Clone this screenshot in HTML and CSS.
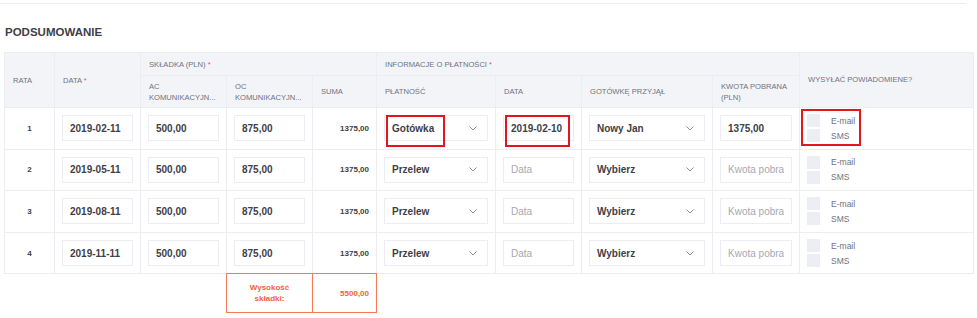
FILE: index.html
```html
<!DOCTYPE html>
<html lang="pl">
<head>
    <meta charset="UTF-8">
    <title>Podsumowanie</title>
    <link rel="stylesheet" href="styles.css">
</head>
<body>

<div class="rule"></div>
<h3 class="section-title">PODSUMOWANIE</h3>

<table class="rates">
    <colgroup>
        <col style="width: 50px">
        <col style="width: 86px">
        <col style="width: 86px">
        <col style="width: 86px">
        <col style="width: 64px">
        <col style="width: 119px">
        <col style="width: 86px">
        <col style="width: 131px">
        <col style="width: 87px">
        <col style="width: 174px">
    </colgroup>
    <thead>
        <tr class="head-top">
            <th rowspan="2">RATA</th>
            <th rowspan="2">DATA <span class="req">*</span></th>
            <th colspan="3">SKŁADKA (PLN) <span class="req">*</span></th>
            <th colspan="4">INFORMACJE O PŁATNOŚCI <span class="req">*</span></th>
            <th rowspan="2" class="notify-head">WYSYŁAĆ POWIADOMIENE?</th>
        </tr>
        <tr class="head-sub">
            <th>AC<br>KOMUNIKACYJN...</th>
            <th>OC<br>KOMUNIKACYJN...</th>
            <th>SUMA</th>
            <th>PŁATNOŚĆ</th>
            <th>DATA</th>
            <th>GOTÓWKĘ PRZYJĄŁ</th>
            <th>KWOTA POBRANA (PLN)</th>
        </tr>
    </thead>
    <tbody>
        <tr>
            <td class="num">1</td>
            <td><input class="field" value="2019-02-11" readonly></td>
            <td><input class="field" value="500,00" readonly></td>
            <td><input class="field" value="875,00" readonly></td>
            <td class="sum">1375,00</td>
            <td class="marked">
                <div class="select"><span>Gotówka</span><svg width="8" height="5" viewBox="0 0 8 5"><path d="M0.5 0.5 L4 4 L7.5 0.5" fill="none" stroke="#8a8e9c" stroke-width="1"/></svg></div>
                <span class="mark mark-pay"></span>
            </td>
            <td class="marked">
                <input class="field" value="2019-02-10" readonly>
                <span class="mark mark-date"></span>
            </td>
            <td><div class="select"><span>Nowy Jan</span><svg width="8" height="5" viewBox="0 0 8 5"><path d="M0.5 0.5 L4 4 L7.5 0.5" fill="none" stroke="#8a8e9c" stroke-width="1"/></svg></div></td>
            <td><input class="field" value="1375,00" readonly></td>
            <td class="marked">
                <div class="notify">
                    <label><span class="box"></span>E-mail</label>
                    <label><span class="box"></span>SMS</label>
                </div>
                <span class="mark mark-notify"></span>
            </td>
        </tr>
        <tr>
            <td class="num">2</td>
            <td><input class="field" value="2019-05-11" readonly></td>
            <td><input class="field" value="500,00" readonly></td>
            <td><input class="field" value="875,00" readonly></td>
            <td class="sum">1375,00</td>
            <td><div class="select"><span>Przelew</span><svg width="8" height="5" viewBox="0 0 8 5"><path d="M0.5 0.5 L4 4 L7.5 0.5" fill="none" stroke="#8a8e9c" stroke-width="1"/></svg></div></td>
            <td><input class="field" placeholder="Data"></td>
            <td><div class="select"><span>Wybierz</span><svg width="8" height="5" viewBox="0 0 8 5"><path d="M0.5 0.5 L4 4 L7.5 0.5" fill="none" stroke="#8a8e9c" stroke-width="1"/></svg></div></td>
            <td><input class="field" placeholder="Kwota pobrana"></td>
            <td>
                <div class="notify">
                    <label><span class="box"></span>E-mail</label>
                    <label><span class="box"></span>SMS</label>
                </div>
            </td>
        </tr>
        <tr>
            <td class="num">3</td>
            <td><input class="field" value="2019-08-11" readonly></td>
            <td><input class="field" value="500,00" readonly></td>
            <td><input class="field" value="875,00" readonly></td>
            <td class="sum">1375,00</td>
            <td><div class="select"><span>Przelew</span><svg width="8" height="5" viewBox="0 0 8 5"><path d="M0.5 0.5 L4 4 L7.5 0.5" fill="none" stroke="#8a8e9c" stroke-width="1"/></svg></div></td>
            <td><input class="field" placeholder="Data"></td>
            <td><div class="select"><span>Wybierz</span><svg width="8" height="5" viewBox="0 0 8 5"><path d="M0.5 0.5 L4 4 L7.5 0.5" fill="none" stroke="#8a8e9c" stroke-width="1"/></svg></div></td>
            <td><input class="field" placeholder="Kwota pobrana"></td>
            <td>
                <div class="notify">
                    <label><span class="box"></span>E-mail</label>
                    <label><span class="box"></span>SMS</label>
                </div>
            </td>
        </tr>
        <tr>
            <td class="num">4</td>
            <td><input class="field" value="2019-11-11" readonly></td>
            <td><input class="field" value="500,00" readonly></td>
            <td><input class="field" value="875,00" readonly></td>
            <td class="sum">1375,00</td>
            <td><div class="select"><span>Przelew</span><svg width="8" height="5" viewBox="0 0 8 5"><path d="M0.5 0.5 L4 4 L7.5 0.5" fill="none" stroke="#8a8e9c" stroke-width="1"/></svg></div></td>
            <td><input class="field" placeholder="Data"></td>
            <td><div class="select"><span>Wybierz</span><svg width="8" height="5" viewBox="0 0 8 5"><path d="M0.5 0.5 L4 4 L7.5 0.5" fill="none" stroke="#8a8e9c" stroke-width="1"/></svg></div></td>
            <td><input class="field" placeholder="Kwota pobrana"></td>
            <td>
                <div class="notify">
                    <label><span class="box"></span>E-mail</label>
                    <label><span class="box"></span>SMS</label>
                </div>
            </td>
        </tr>
    </tbody>
</table>

<div class="total">
    <div class="total-label">Wysokość<br>składki:</div>
    <div class="total-sum">5500,00</div>
</div>

</body>
</html>
```

FILE: styles.css
```css
body {
    font-family: 'Liberation Sans', Arial, sans-serif;
    color: #3f4047;
    background: #fff;
    margin: 0;
    padding: 3px 0 0 4px;
}
.rule {
    height: 1px;
    width: 966px;
    margin-left: -4px;
    background: #ebedf2;
}
.section-title {
    font-size: 11.5px;
    line-height: 13px;
    font-weight: bold;
    margin: 21.5px 0 13.5px 1px;
}
.rates {
    border-collapse: collapse;
    table-layout: fixed;
    width: 969px;
}
.rates th,
.rates td {
    border: 1px solid #ebedf2;
    padding: 0 7px;
    vertical-align: middle;
}
.rates th {
    background: #f3f4f8;
    color: #6f727d;
    font-size: 7.6px;
    line-height: 11px;
    font-weight: normal;
    text-align: left;
    padding-left: 8px;
}
.rates thead tr:first-child th:first-child {
    text-align: left;
}
.head-top {
    height: 23px;
}
.head-sub {
    height: 32px;
}
.notify-head {
    vertical-align: top !important;
    padding-top: 21px !important;
}
.req {
    color: #f4516c;
}
.rates tbody tr {
    height: 41.6px;
}
.num {
    text-align: center;
    font-size: 8px;
    font-weight: bold;
}
.sum {
    text-align: right;
    font-size: 8px;
    font-weight: bold;
}
.field {
    display: block;
    width: 100%;
    height: 26px;
    box-sizing: border-box;
    border: 1px solid #ebedf2;
    border-radius: 0;
    padding: 0 7px;
    margin: 0;
    font-family: inherit;
    font-size: 10px;
    font-weight: bold;
    color: #3f4047;
    background: #fff;
    outline: none;
}
.field::placeholder {
    color: #a5a8b6;
    font-weight: normal;
}
.select {
    display: flex;
    align-items: center;
    justify-content: space-between;
    height: 26px;
    box-sizing: border-box;
    border: 1px solid #ebedf2;
    padding: 0 10px 0 7px;
    font-size: 10px;
    font-weight: bold;
}
.notify {
    display: flex;
    flex-direction: column;
    gap: 2px;
}
.notify label {
    display: flex;
    align-items: center;
    gap: 11px;
    font-size: 8.5px;
    color: #6f727d;
    line-height: 12px;
}
.notify .box {
    width: 13px;
    height: 13px;
    background: #eceef3;
}
.marked {
    position: relative;
}
.mark {
    position: absolute;
    border: 2px solid #e3161f;
    box-sizing: border-box;
}
.mark-pay {
    left: 9px;
    top: 7px;
    width: 59px;
    height: 32px;
}
.mark-date {
    left: 9px;
    top: 7px;
    width: 65px;
    height: 32px;
}
.mark-notify {
    left: 1px;
    top: 1px;
    width: 60px;
    height: 37px;
}
.total {
    display: flex;
    margin: -1px 0 0 222px;
}
.total > div {
    height: 40px;
    box-sizing: border-box;
    border: 1px solid #f47b55;
    color: #f4633a;
    font-size: 8px;
    font-weight: bold;
    display: flex;
    align-items: center;
}
.total-label {
    width: 87px;
    justify-content: center;
    text-align: center;
    line-height: 11px;
}
.total-sum {
    width: 65px;
    margin-left: -1px;
    justify-content: flex-end;
    padding-right: 7px;
}
```
